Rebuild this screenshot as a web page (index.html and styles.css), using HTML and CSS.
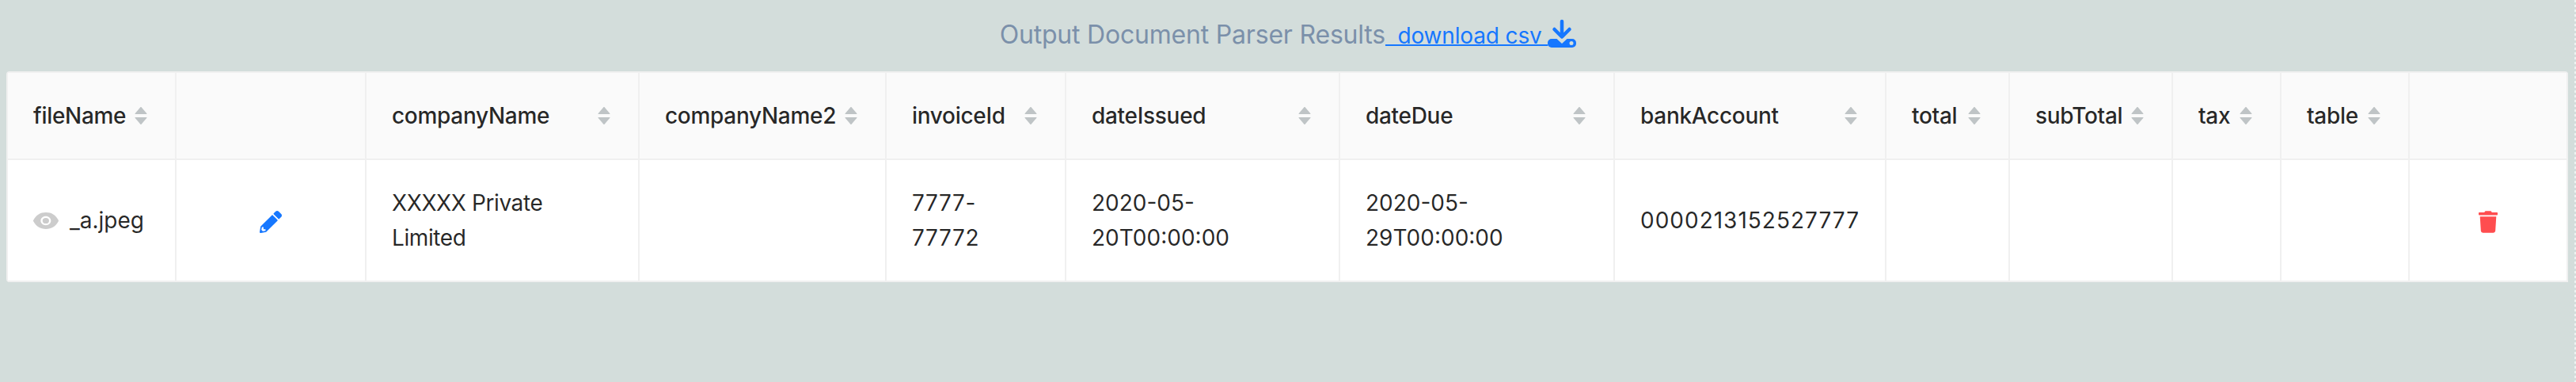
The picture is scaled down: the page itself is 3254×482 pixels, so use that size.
FILE: index.html
```html
<!DOCTYPE html>
<html lang="en">
<head>
<meta charset="utf-8">
<title>Output Document Parser Results</title>
<link rel="stylesheet" href="styles.css">
</head>
<body>
<svg class="defs" width="0" height="0" aria-hidden="true">
  <symbol id="sorter" viewBox="0 308 1024 1018">
    <path d="M858.9 689L530.5 308.2c-9.4-10.9-27.5-10.9-37 0L165.1 689c-12.2 14.2-1.2 35 18.5 35h656.8c19.7 0 30.7-20.8 18.5-35z"/>
    <path transform="translate(0 610)" d="M840.4 300H183.6c-19.7 0-30.7 20.8-18.5 35l328.4 380.8c9.4 10.9 27.5 10.9 37 0L858.9 335c12.2-14.2 1.2-35-18.5-35z"/>
  </symbol>
</svg>
<h1 class="title">Output Document Parser Results<a class="link" href="#">&nbsp;&nbsp;download csv&nbsp;</a><svg class="icon-download" viewBox="0 0 36 36"><path class="arrow" d="M18 3V22M8.5 13L18 22.5L27.5 13"/><path class="tray" fill-rule="evenodd" d="M5 25h6.500l6.500 6 6.500-6H31a5 5 0 0 1 5 5v1a5 5 0 0 1-5 5H5a5 5 0 0 1-5-5v-1a5 5 0 0 1 5-5zM30 28a2.500 2.500 0 1 0 0 5 2.500 2.500 0 0 0 0-5z"/></svg></h1>
<table class="results">
  <colgroup>
    <col class="c1"><col class="c2"><col class="c3"><col class="c4"><col class="c5"><col class="c6"><col class="c7"><col class="c8"><col class="c9"><col class="c10"><col class="c11"><col class="c12"><col class="c13">
  </colgroup>
  <thead>
    <tr>
      <th><div class="head">fileName<svg class="sorter"><use href="#sorter"/></svg></div></th>
      <th></th>
      <th><div class="head">companyName<svg class="sorter"><use href="#sorter"/></svg></div></th>
      <th><div class="head">companyName2<svg class="sorter"><use href="#sorter"/></svg></div></th>
      <th><div class="head">invoiceId<svg class="sorter"><use href="#sorter"/></svg></div></th>
      <th><div class="head">dateIssued<svg class="sorter"><use href="#sorter"/></svg></div></th>
      <th><div class="head">dateDue<svg class="sorter"><use href="#sorter"/></svg></div></th>
      <th><div class="head">bankAccount<svg class="sorter"><use href="#sorter"/></svg></div></th>
      <th><div class="head">total<svg class="sorter"><use href="#sorter"/></svg></div></th>
      <th><div class="head">subTotal<svg class="sorter"><use href="#sorter"/></svg></div></th>
      <th><div class="head">tax<svg class="sorter"><use href="#sorter"/></svg></div></th>
      <th><div class="head">table<svg class="sorter"><use href="#sorter"/></svg></div></th>
      <th></th>
    </tr>
  </thead>
  <tbody>
    <tr>
      <td><div class="file"><svg class="icon-eye" viewBox="76 186 872 652" preserveAspectRatio="none"><path d="M396 512a112 112 0 1 0 224 0 112 112 0 1 0-224 0zm546.200-25.800C847.400 286.500 704.100 186 512 186c-192.200 0-335.400 100.500-430.200 300.300a60.300 60.300 0 0 0 0 51.500C176.600 737.500 319.900 838 512 838c192.200 0 335.400-100.500 430.200-300.300 7.700-16.200 7.700-35 0-51.500zM508 688c-97.200 0-176-78.800-176-176s78.800-176 176-176 176 78.800 176 176-78.800 176-176 176z"/></svg>_a.jpeg</div></td>
      <td class="center"><svg class="icon-edit" viewBox="0 0 512 512"><path d="M497.900 142.100l-46.100 46.100c-4.700 4.700-12.300 4.700-17 0l-111-111c-4.700-4.700-4.700-12.300 0-17l46.100-46.100c18.700-18.700 49.100-18.700 67.900 0l60.100 60.100c18.800 18.700 18.800 49.100 0 67.900zM284.200 99.800L21.600 362.400.4 483.900c-2.900 16.400 11.400 30.600 27.800 27.800l121.500-21.300 262.600-262.600c4.700-4.700 4.700-12.300 0-17l-111-111c-4.800-4.700-12.400-4.700-17.100 0zM88 424h48v36.300l-64.500 11.300-31.100-31.100L51.700 376H88v48z"/></svg></td>
      <td class="company">XXXXX Private Limited</td>
      <td></td>
      <td class="invoice">7777-77772</td>
      <td>2020-05-20T00:00:00</td>
      <td>2020-05-29T00:00:00</td>
      <td class="bank">0000213152527777</td>
      <td></td>
      <td></td>
      <td></td>
      <td></td>
      <td class="center"><svg class="icon-trash" viewBox="0 0 448 512"><path d="M432 32H312l-9.400-18.700A24 24 0 0 0 281.100 0H166.800a23.720 23.720 0 0 0-21.400 13.300L136 32H16A16 16 0 0 0 0 48v32a16 16 0 0 0 16 16h416a16 16 0 0 0 16-16V48a16 16 0 0 0-16-16zM53.200 467a48 48 0 0 0 47.900 45h245.800a48 48 0 0 0 47.900-45L416 128H32z"/></svg></td>
    </tr>
  </tbody>
</table>
</body>
</html>
```

FILE: styles.css
```css
* {
  box-sizing: border-box;
}

html,
body {
  margin: 0;
  height: 100%;
}

body {
  background: #d3dddb;
  padding: 0 8px;
  font-family: Inter, "Liberation Sans", sans-serif;
  font-size: 28px;
  line-height: 44px;
  color: rgba(0, 0, 0, 0.85);
  overflow: hidden;
}

body::after {
  content: "";
  position: fixed;
  top: 0;
  right: 0;
  bottom: 0;
  width: 2px;
  background: repeating-linear-gradient(to bottom, #eef2f1 0 3px, transparent 3px 6px);
}

.defs {
  position: absolute;
}

.title {
  margin: 0;
  height: 90px;
  padding-top: 22px;
  display: flex;
  justify-content: center;
  align-items: flex-start;
  font-size: 32px;
  line-height: 44px;
  font-weight: 400;
  letter-spacing: -0.2px;
  color: #7b90aa;
  white-space: pre;
}

.link {
  font-size: 28px;
  letter-spacing: -0.15px;
  color: #1677ff;
  text-decoration: underline;
  text-decoration-thickness: 2px;
  margin-top: 1px;
}

.icon-download {
  width: 36px;
  height: 36px;
  margin-top: 2px;
}

.icon-download .arrow {
  fill: none;
  stroke: #1677ff;
  stroke-width: 4.5;
  stroke-linecap: round;
  stroke-linejoin: round;
}

.icon-download .tray {
  fill: #1677ff;
}

.results {
  width: 3236px;
  table-layout: fixed;
  border-collapse: separate;
  border-spacing: 0;
  border: 2px solid #f0f0f0;
  border-width: 2px 0 0 2px;
  border-radius: 4px;
  background: #fff;
}

.c1 { width: 213px; }
.c2 { width: 240px; }
.c3 { width: 345px; }
.c4 { width: 312px; }
.c5 { width: 227px; }
.c6 { width: 346px; }
.c7 { width: 347px; }
.c8 { width: 343px; }
.c9 { width: 156px; }
.c10 { width: 206px; }
.c11 { width: 137px; }
.c12 { width: 162px; }
.c13 { width: 200px; }

th,
td {
  padding: 32px;
  border-right: 2px solid #f0f0f0;
  border-bottom: 2px solid #f0f0f0;
  text-align: left;
}

th {
  height: 110px;
  background: #fafafa;
  font-weight: 450;
  letter-spacing: -0.3px;
}

td {
  height: 154px;
  font-weight: 400;
}

.company {
  letter-spacing: -0.4px;
}

.invoice {
  letter-spacing: 0.6px;
}

.bank {
  letter-spacing: 1px;
}

.head {
  display: flex;
  justify-content: space-between;
  align-items: center;
}

.sorter {
  width: 22px;
  height: 22px;
  fill: #bfc4c6;
  flex: none;
}

.file {
  display: flex;
  align-items: center;
  gap: 14px;
}

.icon-eye {
  width: 32px;
  height: 21px;
  fill: #cccccc;
  flex: none;
}

.center {
  text-align: center;
}

.icon-edit {
  width: 28px;
  height: 28px;
  fill: #1677ff;
  vertical-align: middle;
}

.icon-trash {
  width: 24px;
  height: 28px;
  fill: #ff4d4f;
  vertical-align: middle;
}
```
